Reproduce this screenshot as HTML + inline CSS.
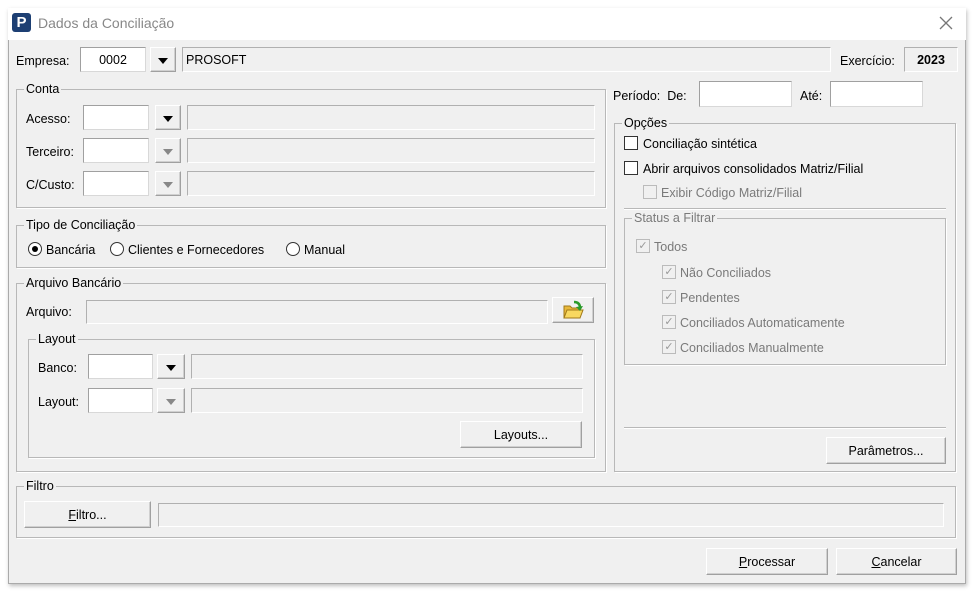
<!DOCTYPE html>
<html><head><meta charset="utf-8">
<style>
*{box-sizing:border-box;margin:0;padding:0}
body{width:975px;height:591px;background:#fff;font-family:"Liberation Sans",sans-serif;font-size:12.5px;color:#000;position:relative;overflow:hidden}
.win{position:absolute;left:8px;top:8px;width:958px;height:576px;background:#f0f0f0;border:1px solid #aaa;box-shadow:1px 2px 4px rgba(0,0,0,.25)}
.a{position:absolute}
.t{margin-top:1px}
.title{position:absolute;left:8px;top:8px;width:958px;height:32px;background:#fff}
.inp{position:absolute;background:#fff;border:1px solid #d8d8d8;border-top-color:#a0a0a0;border-left-color:#a0a0a0}
.ro{position:absolute;background:#f0f0f0;border:1px solid #fff;border-top-color:#b0b0b0;border-left-color:#b0b0b0}
.btn{position:absolute;background:#f0f0f0;border:1px solid #a0a0a0;border-top-color:#fff;border-left-color:#fff;box-shadow:inset -1px -1px 0 #d0d0d0;text-align:center}
.dd::after{content:"";position:absolute;left:50%;top:50%;margin-left:-5px;margin-top:-2px;border-left:5px solid transparent;border-right:5px solid transparent;border-top:6px solid #000}
.dd.g::after{border-top-color:#888}
.grp{position:absolute;border:1px solid #b8b8b8;box-shadow:1px 1px 0 #fff}
.lg{position:absolute;background:#f0f0f0;padding:0 2px;top:-9px;left:7px;line-height:16px}
.cb{position:absolute;width:14px;height:14px;background:#fff;border:1px solid #333}
.cb.d{background:#f0f0f0;border-color:#bbb;color:#999;font-size:11px;line-height:12px;text-align:center}
.rd{position:absolute;width:14px;height:14px;border-radius:50%;background:#fff;border:1px solid #333}
.gr{color:#7a7a7a}
</style></head><body>
<div class="win"></div>
<div class="title"></div>
<div class="a" style="left:12px;top:13px;width:19px;height:19px;background:#1d3f73;border-radius:3px;color:#fff;font-weight:bold;font-size:15px;line-height:19px;text-align:center">P</div>
<div class="a" style="left:38px;top:15px;font-size:14px;color:#888">Dados da Conciliação</div>
<svg class="a" style="left:939px;top:16px" width="14" height="14"><path d="M1 1L13 13M13 1L1 13" stroke="#777" stroke-width="1.3"/></svg>

<div class="a t" style="left:16px;top:53px">Empresa:</div>
<div class="inp" style="left:80px;top:47px;width:66px;height:25px;text-align:center;line-height:24px">0002</div>
<div class="btn dd" style="left:150px;top:47px;width:26px;height:25px"></div>
<div class="ro" style="left:182px;top:47px;width:649px;height:25px;padding-left:3px;line-height:24px">PROSOFT</div>
<div class="a t" style="left:840px;top:53px">Exercício:</div>
<div class="ro" style="left:904px;top:47px;width:54px;height:25px;font-weight:bold;text-align:center;line-height:24px">2023</div>

<div class="grp" style="left:16px;top:89px;width:590px;height:119px"><div class="lg">Conta</div></div>
<div class="a t" style="left:26px;top:111px">Acesso:</div>
<div class="inp" style="left:83px;top:105px;width:66px;height:25px"></div>
<div class="btn dd" style="left:155px;top:105px;width:26px;height:25px"></div>
<div class="ro" style="left:187px;top:105px;width:408px;height:25px"></div>
<div class="a t" style="left:26px;top:144px">Terceiro:</div>
<div class="inp" style="left:83px;top:138px;width:66px;height:25px"></div>
<div class="btn dd g" style="left:155px;top:138px;width:26px;height:25px"></div>
<div class="ro" style="left:187px;top:138px;width:408px;height:25px"></div>
<div class="a t" style="left:26px;top:177px">C/Custo:</div>
<div class="inp" style="left:83px;top:171px;width:66px;height:25px"></div>
<div class="btn dd g" style="left:155px;top:171px;width:26px;height:25px"></div>
<div class="ro" style="left:187px;top:171px;width:408px;height:25px"></div>

<div class="grp" style="left:16px;top:225px;width:590px;height:43px"><div class="lg">Tipo de Conciliação</div></div>
<div class="rd" style="left:28px;top:242px"><div style="position:absolute;left:3px;top:3px;width:6px;height:6px;border-radius:50%;background:#000"></div></div>
<div class="a t" style="left:46px;top:242px">Bancária</div>
<div class="rd" style="left:110px;top:242px"></div>
<div class="a t" style="left:128px;top:242px">Clientes e Fornecedores</div>
<div class="rd" style="left:286px;top:242px"></div>
<div class="a t" style="left:304px;top:242px">Manual</div>

<div class="grp" style="left:16px;top:283px;width:590px;height:189px"><div class="lg">Arquivo Bancário</div></div>
<div class="a t" style="left:26px;top:304px">Arquivo:</div>
<div class="ro" style="left:86px;top:300px;width:462px;height:24px"></div>
<div class="btn" style="left:552px;top:297px;width:42px;height:26px">
<svg width="22" height="20" viewBox="0 0 22 20" style="margin-top:2px"><path d="M2 6h6l2 2h8v10H2z" fill="#e8b83a" stroke="#a07818"/><path d="M2 18l3-8h16l-3 8z" fill="#f8d860" stroke="#a07818"/><path d="M12 2c4 0 6 2 6 6" fill="none" stroke="#2a9a2a" stroke-width="2.5"/><path d="M14 7l4 4 3-5z" fill="#2a9a2a"/></svg></div>
<div class="grp" style="left:28px;top:339px;width:567px;height:119px"><div class="lg">Layout</div></div>
<div class="a t" style="left:38px;top:360px">Banco:</div>
<div class="inp" style="left:88px;top:354px;width:65px;height:25px"></div>
<div class="btn dd" style="left:157px;top:354px;width:28px;height:25px"></div>
<div class="ro" style="left:191px;top:354px;width:392px;height:25px"></div>
<div class="a t" style="left:38px;top:394px">Layout:</div>
<div class="inp" style="left:88px;top:388px;width:65px;height:25px"></div>
<div class="btn dd g" style="left:157px;top:388px;width:28px;height:25px"></div>
<div class="ro" style="left:191px;top:388px;width:392px;height:25px"></div>
<div class="btn" style="left:460px;top:421px;width:122px;height:27px;line-height:26px">Layouts...</div>

<div class="a t" style="left:613px;top:88px">Período:&nbsp; De:</div>
<div class="inp" style="left:699px;top:81px;width:93px;height:26px"></div>
<div class="a t" style="left:800px;top:88px">Até:</div>
<div class="inp" style="left:830px;top:81px;width:93px;height:26px"></div>

<div class="grp" style="left:614px;top:123px;width:342px;height:349px"><div class="lg">Opções</div></div>
<div class="cb" style="left:624px;top:136px"></div>
<div class="a t" style="left:643px;top:136px">Conciliação sintética</div>
<div class="cb" style="left:624px;top:161px"></div>
<div class="a t" style="left:643px;top:161px">Abrir arquivos consolidados Matriz/Filial</div>
<div class="cb d" style="left:643px;top:185px"></div>
<div class="a gr t" style="left:661px;top:185px">Exibir Código Matriz/Filial</div>
<div class="a" style="left:624px;top:208px;width:322px;height:2px;border-top:1px solid #b8b8b8;border-bottom:1px solid #fff"></div>
<div class="grp" style="left:624px;top:218px;width:322px;height:147px"><div class="lg gr">Status a Filtrar</div></div>
<div class="cb d" style="left:636px;top:239px">✓</div><div class="a gr t" style="left:654px;top:239px">Todos</div>
<div class="cb d" style="left:662px;top:265px">✓</div><div class="a gr t" style="left:680px;top:265px">Não Conciliados</div>
<div class="cb d" style="left:662px;top:290px">✓</div><div class="a gr t" style="left:680px;top:290px">Pendentes</div>
<div class="cb d" style="left:662px;top:315px">✓</div><div class="a gr t" style="left:680px;top:315px">Conciliados Automaticamente</div>
<div class="cb d" style="left:662px;top:340px">✓</div><div class="a gr t" style="left:680px;top:340px">Conciliados Manualmente</div>
<div class="a" style="left:624px;top:427px;width:322px;height:2px;border-top:1px solid #b8b8b8;border-bottom:1px solid #fff"></div>
<div class="btn" style="left:826px;top:437px;width:120px;height:27px;line-height:26px">Parâmetros...</div>

<div class="grp" style="left:16px;top:486px;width:940px;height:52px"><div class="lg">Filtro</div></div>
<div class="btn" style="left:24px;top:501px;width:127px;height:27px;line-height:26px"><u>F</u>iltro...</div>
<div class="ro" style="left:158px;top:503px;width:786px;height:24px"></div>

<div class="btn" style="left:706px;top:548px;width:122px;height:27px;line-height:26px"><u>P</u>rocessar</div>
<div class="btn" style="left:836px;top:548px;width:121px;height:27px;line-height:26px"><u>C</u>ancelar</div>
</body></html>
